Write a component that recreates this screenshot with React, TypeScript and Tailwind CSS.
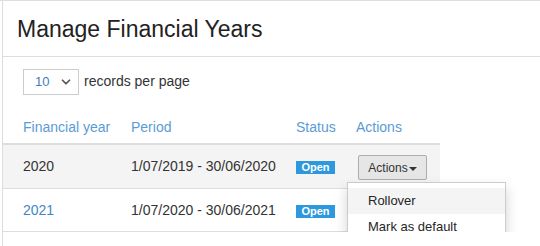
import { ChevronDown } from "lucide-react";

const rows = [
  { year: "2020", period: "1/07/2019 - 30/06/2020", link: false },
  { year: "2021", period: "1/07/2020 - 30/06/2021", link: true },
];

export default function App() {
  return (
    <div
      className="h-[246px] w-[540px] overflow-hidden border-t border-[#dddddd] bg-white text-[14px] text-[#333333]"
      style={{ fontFamily: '"Liberation Sans", Arial, sans-serif' }}
    >
      <div className="ml-[2px] h-full border-l border-[#dddddd]">
        {/* panel heading */}
        <div className="flex h-[56px] items-center border-b border-[#dddddd] pl-[14px]">
          <h1 className="mt-[1px] text-[23px] leading-none text-[#222222]">
            Manage Financial Years
          </h1>
        </div>

        {/* length control */}
        <div className="flex items-center pl-[20px] pt-[12px]">
          <div className="flex h-[26px] w-[56px] items-center justify-between border border-[#cccccc] pl-[11px] pr-[5px]">
            <span className="text-[13px] text-[#3b7dc0]">10</span>
            <ChevronDown size={14} strokeWidth={3} className="text-[#555555]" />
          </div>
          <span className="ml-[5px] -mt-[1px]">records per page</span>
        </div>

        {/* responsive wrapper clips the table and the open menu */}
        <div className="relative mt-[12px] h-[125px] overflow-hidden">
          <div className="w-[437px]">
            <div className="grid h-[38px] grid-cols-[108px_165px_60px_1fr] items-center border-b-2 border-[#dddddd] pt-[4px] text-[#5b9bd5]">
              <span className="pl-[20px]">Financial year</span>
              <span className="pl-[20px]">Period</span>
              <span className="pl-[20px]">Status</span>
              <span className="pl-[20px]">Actions</span>
            </div>
            {rows.map((r, i) => (
              <div
                key={r.year}
                className={`grid grid-cols-[108px_165px_60px_1fr] items-center border-b border-[#dddddd] ${
                  i === 0 ? "h-[44px] bg-[#f4f4f4]" : "h-[43px] bg-white"
                }`}
              >
                <span className={`pl-[20px] ${r.link ? "text-[#3f86c8]" : ""}`}>{r.year}</span>
                <span className="pl-[20px]">{r.period}</span>
                <span className="pl-[20px]">
                  <span className="inline-flex h-[13px] w-[39px] items-center justify-center bg-[#2d98de] text-[11px] font-bold leading-none text-white">
                    Open
                  </span>
                </span>
                <span className="pl-[22px]">
                  {i === 0 && (
                    <button className="mt-[2px] flex h-[25px] w-[69px] items-center justify-center rounded-[2px] border border-[#adadad] bg-[#e6e6e6] text-[12px] text-[#333333]">
                      Actions
                      <span className="ml-[1px] mt-[2px] border-x-[4px] border-t-[4px] border-x-transparent border-t-[#333333]" />
                    </button>
                  )}
                </span>
              </div>
            ))}
          </div>

          {/* open dropdown menu */}
          <div className="absolute left-[344px] top-[75px] w-[159px] border border-[#cccccc] bg-white py-[5px] text-[13px] shadow-[0_6px_12px_rgba(0,0,0,0.175)]">
            <div className="flex h-[26px] items-center bg-[#f4f4f4] pl-[20px] text-[#262626]">Rollover</div>
            <div className="flex h-[26px] items-center pl-[20px] text-[#262626]">Mark as default</div>
          </div>
        </div>
      </div>
    </div>
  );
}
